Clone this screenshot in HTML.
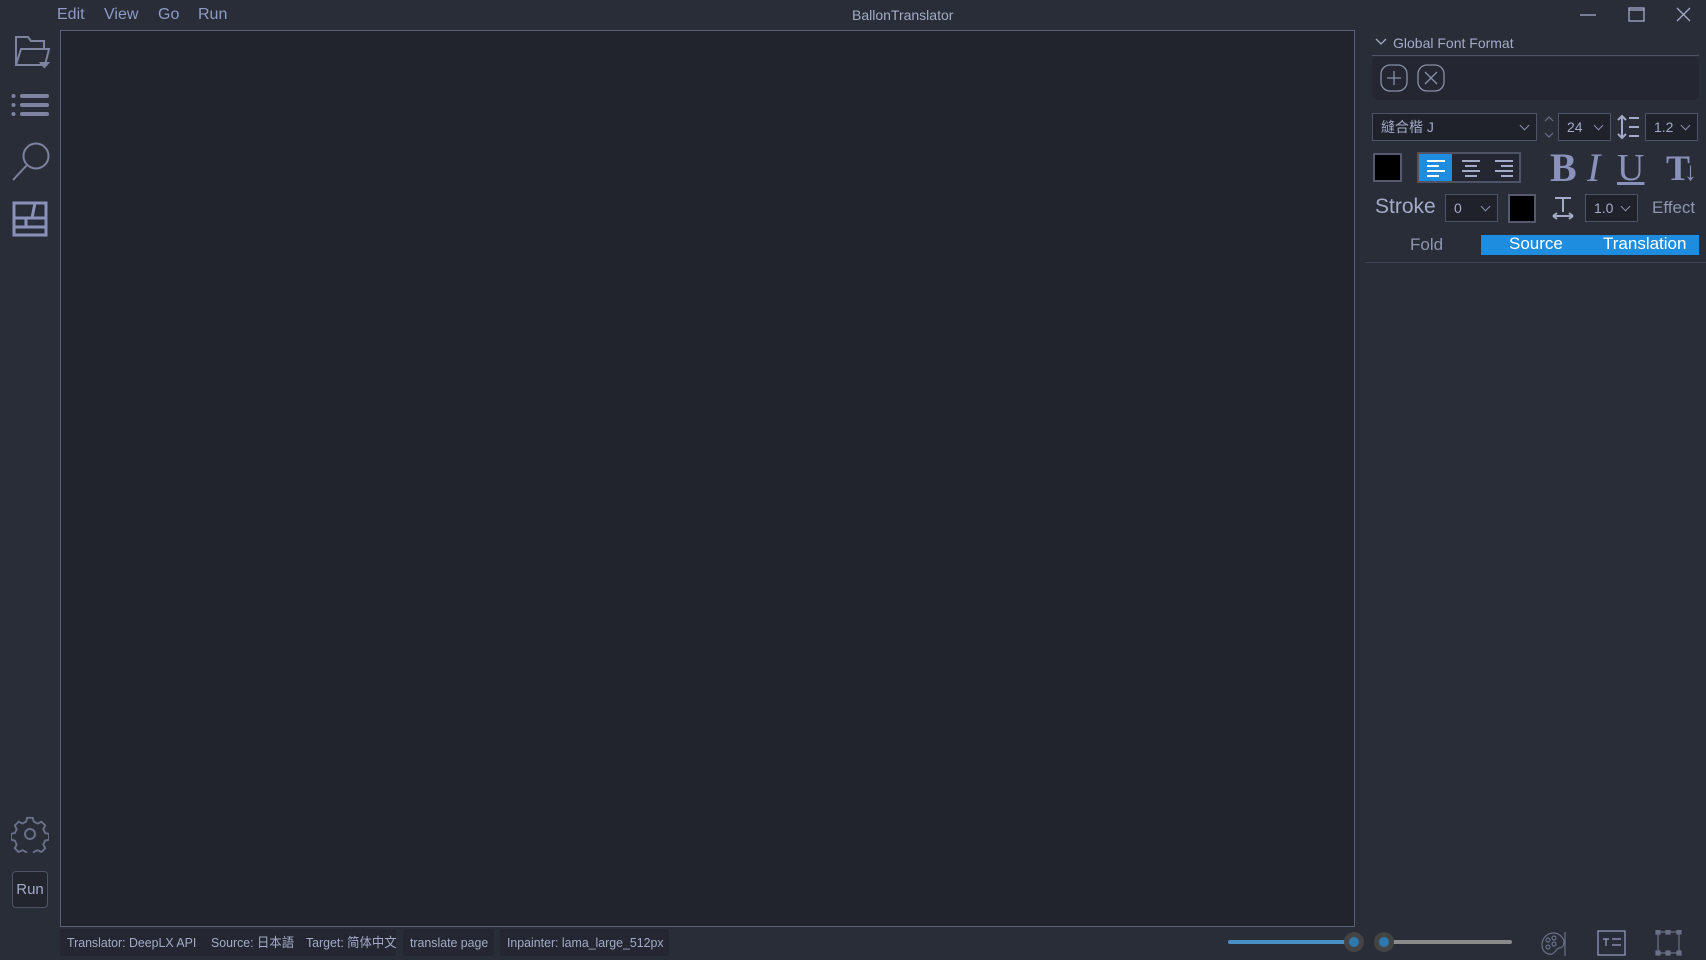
<!DOCTYPE html>
<html><head><meta charset="utf-8"><style>
*{margin:0;padding:0;box-sizing:border-box}
body{width:1706px;height:960px;background:#292d37;font-family:"Liberation Sans","Noto Sans CJK SC",sans-serif;color:#a4aac8;position:relative;overflow:hidden}
.a{position:absolute}
.menu{top:6px;font-size:16px;color:#8f9bc4}
.canvas{left:60px;top:30px;width:1295px;height:897px;background:#21242d;border:1px solid #5a5f78}
.combo{background:#1f222b;border:1px solid #4e5368;color:#a4aac8;font-size:14px;padding-left:8px;line-height:26px}
.combo:after{content:"";position:absolute;right:8px;top:8px;width:6px;height:6px;border-right:1px solid #8a90a8;border-bottom:1px solid #8a90a8;transform:rotate(45deg)}
.sb{top:929px;height:27px;background:#242731;border-radius:3px}
.st{top:929px;height:27px;line-height:27px;font-size:13px;white-space:nowrap;color:#a4aac8;transform:scaleX(0.95);transform-origin:left}
</style></head><body>
<div class="a menu" style="left:57px">Edit</div>
<div class="a menu" style="left:104px">View</div>
<div class="a menu" style="left:158px">Go</div>
<div class="a menu" style="left:198px">Run</div>
<div class="a" style="left:852px;top:7px;font-size:14px;color:#a4aac8">BallonTranslator</div>
<svg class="a" style="left:1570px;top:0" width="136" height="30" stroke="#a4aac8" fill="none" stroke-width="1.3">
<line x1="10" y1="15" x2="26" y2="15"/><rect x="59" y="8" width="15" height="13"/><line x1="59" y1="10" x2="74" y2="10"/>
<path d="M107 8 L120 21 M120 8 L107 21"/></svg>

<svg class="a" style="left:10px;top:32px" width="44" height="220" fill="none" stroke="#7d83a0" stroke-width="2">
<path d="M6 33 V5 H18 L21 9 H34 V16 M6 33 L11 17 H39 L35 33 Z"/><path d="M31 31 l7 0 l-3.5 4z" fill="#7d83a0"/>
<g stroke-width="4" stroke-linecap="round"><line x1="12" y1="64" x2="37" y2="64"/><line x1="12" y1="73" x2="37" y2="73"/><line x1="12" y1="82" x2="37" y2="82"/></g>
<g fill="#7d83a0" stroke="none"><circle cx="3.5" cy="64" r="2"/><circle cx="3.5" cy="73" r="2"/><circle cx="3.5" cy="82" r="2"/></g>
<circle cx="26" cy="124" r="12.5"/><line x1="17" y1="133" x2="3" y2="148"/>
<g stroke="#8a92bc" stroke-width="3"><rect x="4" y="171" width="32" height="32"/><line x1="4" y1="186" x2="36" y2="186"/><line x1="4" y1="195" x2="36" y2="195"/><line x1="16" y1="186" x2="16" y2="195"/><line x1="22" y1="186" x2="25" y2="171"/></g>
</svg>
<svg class="a" style="left:11px;top:815px" width="38" height="38" fill="none" stroke="#6a7088" stroke-width="2">
<circle cx="19" cy="19" r="5"/>
<path d="M16 2h6l1 4 4 2 4-2 4 4-2 4 2 4 4 1v6l-4 1-2 4 2 4-4 4-4-2-4 2-1 4h-6l-1-4-4-2-4 2-4-4 2-4-2-4-4-1v-6l4-1 2-4-2-4 4-4 4 2 4-2z" transform="scale(0.95) translate(1 1)"/></svg>
<div class="a" style="left:12px;top:871px;width:36px;height:37px;border:1px solid #4e5368;border-radius:4px;font-size:15px;line-height:35px;text-align:center;color:#a4aac8;background:#22252e">Run</div>

<div class="a canvas"></div>

<svg class="a" style="left:1374px;top:37px" width="14" height="10" fill="none" stroke="#a4aac8" stroke-width="1.3"><path d="M2 2 L7 7 L12 2"/></svg>
<div class="a" style="left:1393px;top:35px;font-size:14px;color:#a4aac8">Global Font Format</div>
<div class="a" style="left:1372px;top:55px;width:327px;height:1px;background:#4e5368"></div>
<div class="a" style="left:1372px;top:57px;width:327px;height:43px;background:#242731;border-radius:5px"></div>
<svg class="a" style="left:1380px;top:64px" width="70" height="30" fill="none" stroke="#8a90a8" stroke-width="1.3">
<rect x="1" y="1" width="26" height="26" rx="9"/><path d="M14 7v14M7 14h14"/>
<rect x="38" y="1" width="26" height="26" rx="9"/><path d="M45 8l12 12M57 8l-12 12"/></svg>
<div class="a combo" style="left:1372px;top:113px;width:165px;height:28px">縫合楷 J</div>
<svg class="a" style="left:1543px;top:113px" width="12" height="28" fill="none" stroke="#6a7088" stroke-width="1.2"><path d="M2 8l4-4 4 4M2 20l4 4 4-4"/></svg>
<div class="a combo" style="left:1558px;top:113px;width:53px;height:28px">24</div>
<svg class="a" style="left:1617px;top:114px" width="24" height="26" fill="none" stroke="#a4aac8" stroke-width="2"><path d="M5 2v22M1 6l4-4 4 4M1 20l4 4 4-4M12 4h10M12 13h10M12 22h10"/></svg>
<div class="a combo" style="left:1645px;top:113px;width:53px;height:28px">1.2</div>

<div class="a" style="left:1373px;top:153px;width:29px;height:29px;background:#000;border:2px solid #555a6e"></div>
<div class="a" style="left:1417px;top:152px;width:104px;height:31px;border:2px solid #4e5368;background:#242731"></div>
<div class="a" style="left:1419px;top:154px;width:33px;height:27px;background:#1e8de0"></div>
<svg class="a" style="left:1419px;top:154px" width="102" height="27" stroke-width="2">
<g stroke="#fff"><path d="M8 7h18M8 12h12M8 17h18M8 22h12"/></g>
<g stroke="#a4aac8"><path d="M43 7h18M46 12h12M43 17h18M46 22h12M76 7h18M82 12h12M76 17h18M82 22h12"/></g></svg>
<div class="a" style="left:1550px;top:144px;font-family:'Liberation Serif',serif;font-weight:bold;font-size:40px;line-height:48px;color:#8a92bc">B</div>
<div class="a" style="left:1587px;top:144px;font-family:'Liberation Serif',serif;font-style:italic;font-size:40px;line-height:48px;color:#8a92bc">I</div>
<div class="a" style="left:1617px;top:144px;font-family:'Liberation Serif',serif;text-decoration:underline;font-size:38px;line-height:48px;color:#8a92bc">U</div>
<div class="a" style="left:1666px;top:146px;font-family:'Liberation Serif',serif;font-weight:bold;font-size:36px;line-height:44px;color:#8a92bc;letter-spacing:-6px">T<span style="font-weight:normal;font-size:26px">↓</span></div>

<div class="a" style="left:1375px;top:195px;font-size:21px;color:#a4aac8">Stroke</div>
<div class="a combo" style="left:1445px;top:194px;width:53px;height:28px">0</div>
<div class="a" style="left:1508px;top:194px;width:28px;height:29px;background:#000;border:2px solid #555a6e"></div>
<svg class="a" style="left:1551px;top:195px" width="24" height="26" fill="none" stroke="#a4aac8" stroke-width="2"><path d="M4 3h16M12 3v14M2 21h20M2 21l4-3M2 21l4 3M22 21l-4-3M22 21l-4 3"/></svg>
<div class="a combo" style="left:1585px;top:194px;width:53px;height:28px">1.0</div>
<div class="a" style="left:1652px;top:198px;font-size:17px;color:#8f96b0">Effect</div>

<div class="a" style="left:1410px;top:235px;font-size:17px;color:#8f96b0">Fold</div>
<div class="a" style="left:1481px;top:235px;width:218px;height:20px;background:#1e8de0"></div>
<div class="a" style="left:1509px;top:234px;font-size:17px;color:#fff">Source</div>
<div class="a" style="left:1603px;top:234px;font-size:17px;color:#fff">Translation</div>
<div class="a" style="left:1365px;top:262px;width:341px;height:1px;background:#3e4254"></div>

<div class="a sb" style="left:60px;width:336px"></div>
<div class="a sb" style="left:403px;width:91px"></div>
<div class="a sb" style="left:500px;width:169px"></div>
<div class="a st" style="left:67px">Translator: DeepLX API</div>
<div class="a st" style="left:211px">Source: 日本語</div>
<div class="a st" style="left:306px">Target: 简体中文</div>
<div class="a st" style="left:410px">translate page</div>
<div class="a st" style="left:507px">Inpainter: lama_large_512px</div>

<div class="a" style="left:1228px;top:940px;width:120px;height:4px;background:#4a8fc4;border-radius:2px"></div>
<div class="a" style="left:1385px;top:940px;width:127px;height:4px;background:#8a8a8a;border-radius:2px"></div>
<div class="a" style="left:1344px;top:932px;width:20px;height:20px;border-radius:50%;background:#444;"><div style="margin:5px;width:10px;height:10px;border-radius:50%;background:#2f79b0"></div></div>
<div class="a" style="left:1374px;top:932px;width:20px;height:20px;border-radius:50%;background:#444;"><div style="margin:5px;width:10px;height:10px;border-radius:50%;background:#2f79b0"></div></div>
<svg class="a" style="left:1540px;top:930px" width="150" height="28" fill="none" stroke="#6a7088" stroke-width="1.2">
<path d="M14 3C6 3 2 9 2 15c0 7 6 10 10 9 3-1 4-5 7-6 3 0 5-2 5-6 0-3-4-9-10-9z"/><circle cx="8" cy="10" r="2"/><circle cx="14" cy="8" r="2"/><circle cx="8" cy="17" r="2"/><circle cx="14" cy="14" r="2"/><path d="M25 2v24"/>
<rect x="58" y="1" width="27" height="24" stroke="#9aa0c8"/><path d="M63 9h6M66 9v7M72 9h9M72 15h9" stroke="#9aa0c8"/>
<rect x="118" y="2" width="21" height="21"/><g fill="#6a7088"><rect x="116" y="0" width="4" height="4"/><rect x="137" y="0" width="4" height="4"/><rect x="116" y="21" width="4" height="4"/><rect x="137" y="21" width="4" height="4"/><rect x="126" y="0" width="4" height="4"/><rect x="126" y="21" width="4" height="4"/></g></svg>
</body></html>
